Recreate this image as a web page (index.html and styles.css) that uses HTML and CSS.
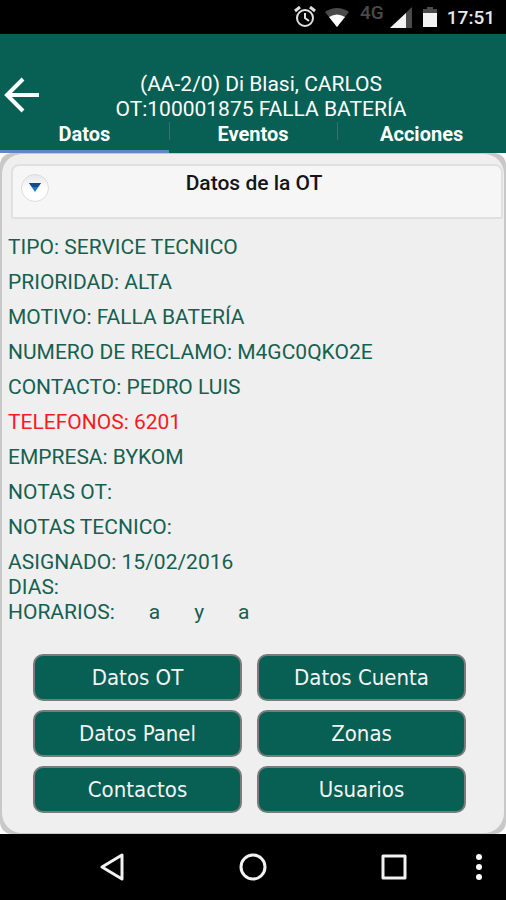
FILE: index.html
```html
<!DOCTYPE html>
<html lang="es">
<head>
    <meta charset="UTF-8">
    <meta name="viewport" content="width=device-width, initial-scale=1.0">
    <title>Datos de la OT</title>
    <link rel="stylesheet" href="styles.css">
</head>
<body>
    <div class="status-bar">
        <svg class="icon-alarm" width="22" height="22" viewBox="0 0 22 22" fill="none" stroke="#e0e0e0" stroke-width="2">
            <circle cx="11" cy="12" r="8"/>
            <path d="M11 7v5l4 3"/>
            <path d="M1 5l5-4M21 5l-5-4" stroke-width="3"/>
        </svg>
        <svg class="icon-wifi" width="26" height="20" viewBox="0 0 26 20">
            <path d="M1 5Q13 -3 25 5L13 20Z" fill="#4a4a4a"/>
            <path d="M5 10Q13 5 21 10L13 20Z" fill="#fff"/>
        </svg>
        <span class="network">4G</span>
        <svg class="icon-signal" width="22" height="21" viewBox="0 0 22 21">
            <path d="M22 0V21H0Z" fill="#4a4a4a"/>
            <path d="M16 6V21H0Z" fill="#f2f2f2"/>
        </svg>
        <svg class="icon-battery" width="14" height="20" viewBox="0 0 14 20">
            <path d="M4 0h6v2h4v4H0V2h4z" fill="#4a4a4a"/>
            <path d="M0 6h14v14H0z" fill="#f2f2f2"/>
        </svg>
        <span class="clock">17:51</span>
    </div>

    <header>
        <div class="title-row">
            <button class="back" aria-label="Volver">
                <svg width="36" height="36" viewBox="0 0 36 36" fill="none" stroke="#fff" stroke-width="4">
                    <path d="M35 18H3M19 2L3 18L19 34"/>
                </svg>
            </button>
            <h1>(AA-2/0) Di Blasi, CARLOS<br>OT:100001875 FALLA BATERÍA</h1>
        </div>
        <nav class="tabs">
            <a href="#" class="active">Datos</a>
            <a href="#">Eventos</a>
            <a href="#">Acciones</a>
        </nav>
    </header>

    <main>
        <section class="panel">
            <div class="panel-title">
                <button class="toggle" aria-label="Contraer">
                    <svg width="12" height="10" viewBox="0 0 12 10">
                        <path d="M0 0h12L6 9z" fill="#1c77c9"/>
                        <path d="M0 0h12L9 4H3z" fill="#124a8c"/>
                    </svg>
                </button>
                <h2>Datos de la OT</h2>
            </div>

            <div class="details">
                <p>TIPO: SERVICE TECNICO</p>
                <p>PRIORIDAD: ALTA</p>
                <p>MOTIVO: FALLA BATERÍA</p>
                <p>NUMERO DE RECLAMO: M4GC0QKO2E</p>
                <p>CONTACTO: PEDRO LUIS</p>
                <p class="phone">TELEFONOS: 6201</p>
                <p>EMPRESA: BYKOM</p>
                <p>NOTAS OT:</p>
                <p>NOTAS TECNICO:</p>
                <div class="schedule">
                    <p>ASIGNADO: 15/02/2016</p>
                    <p>DIAS:</p>
                    <p class="hours"><span>HORARIOS:</span><span>a</span><span>y</span><span>a</span></p>
                </div>
            </div>

            <div class="actions">
                <button>Datos OT</button>
                <button>Datos Cuenta</button>
                <button>Datos Panel</button>
                <button>Zonas</button>
                <button>Contactos</button>
                <button>Usuarios</button>
            </div>
        </section>
    </main>

    <footer>
        <button class="nav-back" aria-label="Atrás">
            <svg width="26" height="28" viewBox="0 0 26 28" fill="none" stroke="#f2f2f2" stroke-width="3" stroke-linejoin="round">
                <path d="M23 2V26L3 14Z"/>
            </svg>
        </button>
        <button class="nav-home" aria-label="Inicio">
            <svg width="28" height="28" viewBox="0 0 28 28" fill="none" stroke="#f2f2f2" stroke-width="3">
                <circle cx="14" cy="14" r="12"/>
            </svg>
        </button>
        <button class="nav-recent" aria-label="Recientes">
            <svg width="26" height="26" viewBox="0 0 26 26" fill="none" stroke="#f2f2f2" stroke-width="3" stroke-linejoin="round">
                <path d="M2 2h22v22H2z"/>
            </svg>
        </button>
        <button class="nav-more" aria-label="Más opciones">
            <svg width="8" height="28" viewBox="0 0 8 28" fill="#fff">
                <circle cx="4" cy="4" r="3"/>
                <circle cx="4" cy="14" r="3"/>
                <circle cx="4" cy="24" r="3"/>
            </svg>
        </button>
    </footer>
</body>
</html>
```
FILE: styles.css
```css
* {
    box-sizing: border-box;
}

body {
    display: flex;
    flex-direction: column;
    min-height: 100vh;
    margin: 0;
    font-family: Roboto, sans-serif;
    background-color: #fff;
}

h1, h2, p {
    margin: 0;
}

button {
    padding: 0;
    border: 0;
    background: none;
    cursor: pointer;
}

svg {
    display: block;
}

.status-bar {
    display: flex;
    justify-content: flex-end;
    align-items: center;
    height: 34px;
    padding-right: 11px;
    background-color: #000;
}

.network {
    margin: 0 6px 0 10px;
    padding-bottom: 8px;
    font-size: 19px;
    line-height: 20px;
    font-weight: 500;
    color: #4a4a4a;
}

.icon-wifi {
    margin-left: 8px;
}

.icon-battery {
    margin: 0 10px 0 11px;
}

.clock {
    font-size: 19px;
    font-weight: 500;
    color: #e8e8e8;
}

header {
    background-color: #085f54;
    color: #fff;
}

.title-row {
    display: grid;
    grid-template-columns: 40px 1fr 28px;
    padding: 38px 0 0 4px;
}

.back {
    align-self: start;
    margin-top: 5px;
}

header h1 {
    font-size: 21px;
    line-height: 25px;
    font-weight: 400;
    text-align: center;
}

.tabs {
    display: grid;
    grid-template-columns: repeat(3, 1fr);
}

.tabs a {
    height: 31px;
    border-bottom: 3px solid #085f54;
    font-size: 20px;
    line-height: 24px;
    font-weight: 700;
    color: #fff;
    text-align: center;
    text-decoration: none;
}

.tabs a + a {
    background: linear-gradient(#35746c, #35746c) left top / 1px 18px no-repeat;
}

.tabs a.active {
    border-color: #6585c5;
}

main {
    flex: 1;
    display: flex;
    padding: 1px 2px;
    border-radius: 12px;
    background-color: #c8c8c8;
}

.panel {
    flex: 1;
    padding: 10px 1px 18px 9px;
    border-radius: 20px;
    background-color: #efefef;
}

.panel-title {
    display: grid;
    grid-template-columns: 28px 1fr 34px;
    height: 55px;
    padding: 6px 8px;
    border: 2px solid #e0e0e0;
    border-radius: 8px 8px 2px 2px;
    background-color: #f6f6f6;
}

.toggle {
    display: flex;
    justify-content: center;
    align-items: center;
    width: 28px;
    height: 28px;
    margin-top: 2px;
    border: 1px solid #dcdcdc;
    border-radius: 50%;
    background: linear-gradient(#e8e8e8, #fff 60%);
}

.panel-title h2 {
    font-size: 21px;
    line-height: 22px;
    font-weight: 500;
    color: #151515;
    text-align: center;
}

.details {
    display: flex;
    flex-direction: column;
    gap: 10px;
    margin: 16px 0 29px -3px;
    font-size: 21px;
    line-height: 25px;
    color: #175f50;
}

.phone {
    color: #f81a1e;
}

.hours {
    display: flex;
    gap: 34px;
}

.actions {
    display: grid;
    grid-template-columns: 1fr 1fr;
    gap: 9px 15px;
    padding: 0 37px 0 22px;
}

.actions button {
    height: 47px;
    border: 2px solid #7b7b7b;
    border-radius: 10px;
    background-color: #085f54;
    font-family: "DejaVu Sans Condensed", "DejaVu Sans", sans-serif;
    font-size: 22px;
    color: #f4f4f4;
}

footer {
    display: flex;
    align-items: center;
    justify-content: flex-end;
    height: 66px;
    padding-right: 23px;
    background-color: #000;
}

.nav-home {
    margin: 0 114px;
}

.nav-more {
    margin-left: 68px;
}
```
